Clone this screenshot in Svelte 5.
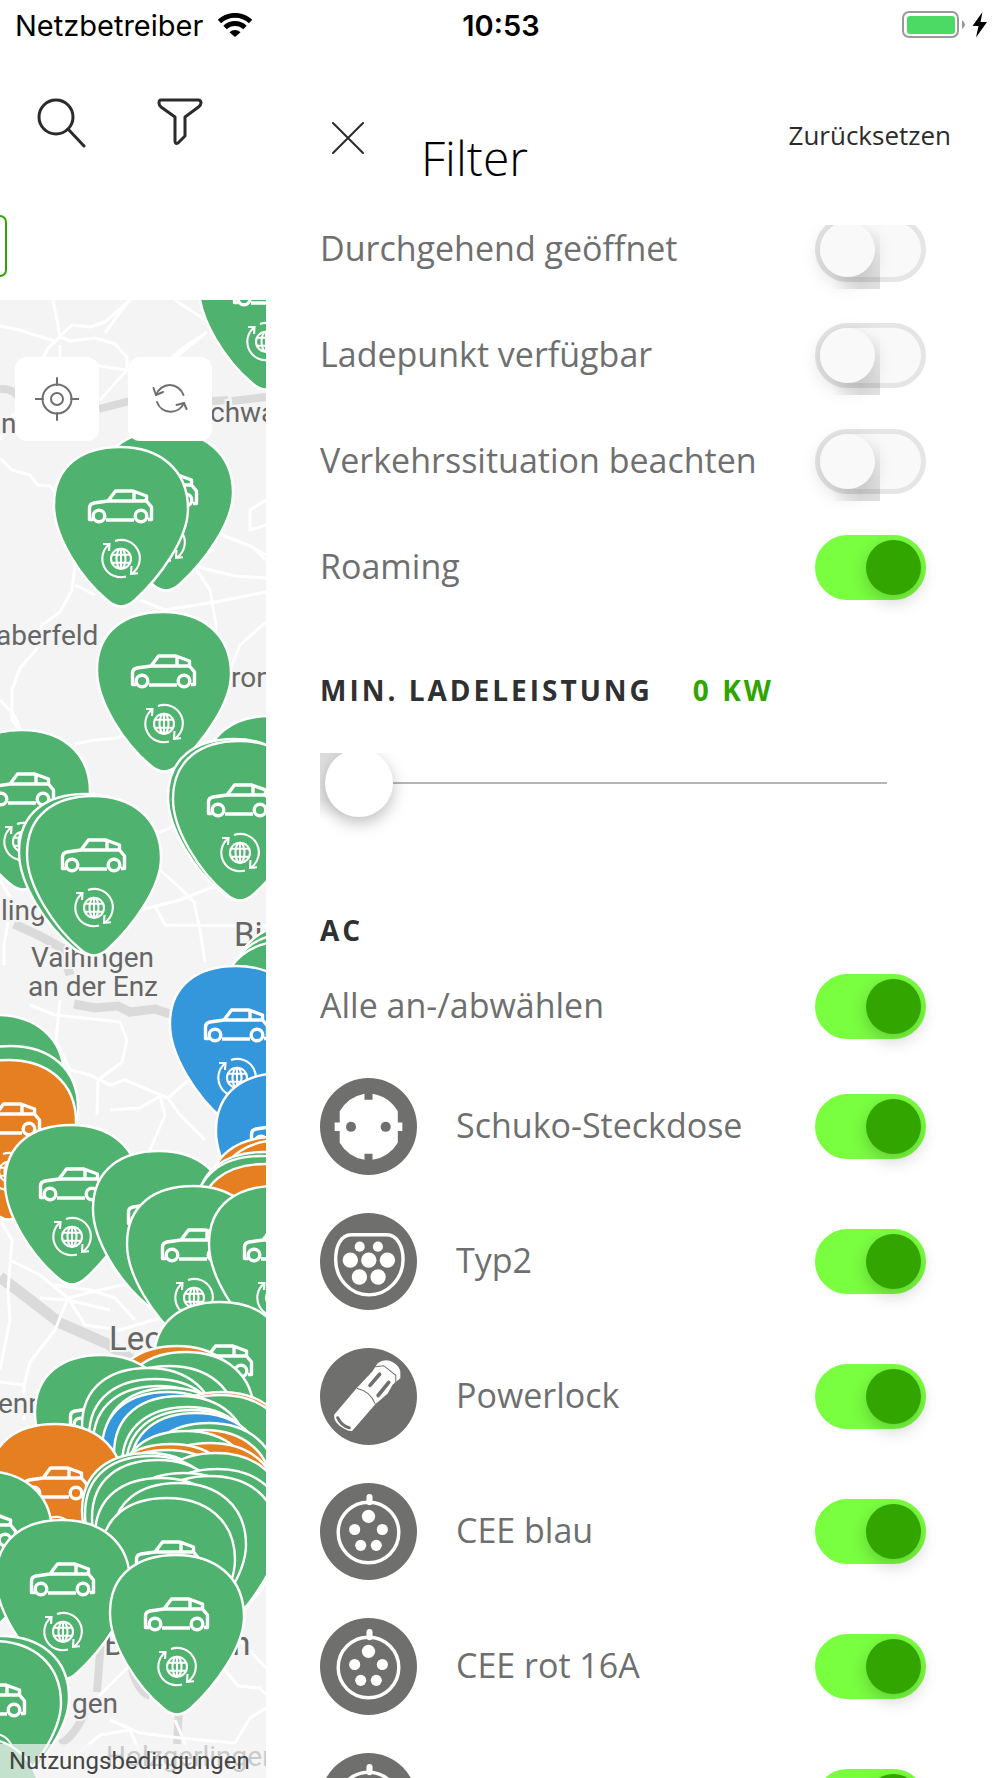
<script lang="ts">
  type Plug = 'schuko' | 'typ2' | 'powerlock' | 'cee';

  interface Option {
    id: string;
    label: string;
    on: boolean;
    plug?: Plug;
  }

  let general: Option[] = $state([
    { id: 'open', label: 'Durchgehend geöffnet', on: false },
    { id: 'free', label: 'Ladepunkt verfügbar', on: false },
    { id: 'traffic', label: 'Verkehrssituation beachten', on: false },
    { id: 'roaming', label: 'Roaming', on: true },
  ]);

  let connectors: Option[] = $state([
    { id: 'schuko', label: 'Schuko-Steckdose', on: true, plug: 'schuko' },
    { id: 'typ2', label: 'Typ2', on: true, plug: 'typ2' },
    { id: 'powerlock', label: 'Powerlock', on: true, plug: 'powerlock' },
    { id: 'cee-blue', label: 'CEE blau', on: true, plug: 'cee' },
    { id: 'cee-16', label: 'CEE rot 16A', on: true, plug: 'cee' },
    { id: 'cee-32', label: 'CEE rot 32A', on: true, plug: 'cee' },
  ]);

  let power = $state(0);
  let allOn = $derived(connectors.every((c) => c.on));

  function toggleAll() {
    const next = !allOn;
    connectors.forEach((c) => (c.on = next));
  }

  function reset() {
    power = 0;
    general.forEach((o) => (o.on = o.id === 'roaming'));
    connectors.forEach((c) => (c.on = true));
  }

  // Map markers, back to front: [x of the tip, top edge, colour]
  const G = '#4fb26e';
  const B = '#3496db';
  const O = '#e67e22';
  const pins: [number, number, string][] = [
    [266, 230, G], [166, 431, G], [121, 447, G], [164, 612, G],
    [272, 716, G], [23, 730, G], [235, 739, G], [240, 741, G],
    [86, 794, G], [94, 796, G], [302, 924, G], [296, 933, G],
    [290, 941, G], [237, 966, B], [-3, 1015, G], [11, 1046, G],
    [9, 1060, O], [283, 1073, B], [72, 1125, G], [276, 1137, O],
    [284, 1140, O], [160, 1151, G], [264, 1152, G], [262, 1156, G],
    [266, 1164, O], [194, 1186, G], [276, 1186, G], [221, 1302, G],
    [178, 1346, O], [187, 1352, G], [102, 1355, G], [170, 1366, G],
    [149, 1368, G], [156, 1379, G], [160, 1386, G], [171, 1388, G],
    [169, 1392, B], [223, 1392, O], [222, 1395, G], [181, 1396, G],
    [189, 1407, G], [193, 1410, G], [197, 1413, B], [210, 1423, G],
    [205, 1430, O], [187, 1431, G], [211, 1443, O], [172, 1444, O],
    [56, 1424, O], [168, 1450, G], [149, 1453, G], [217, 1453, G],
    [152, 1456, G], [159, 1460, G], [218, 1469, G], [185, 1473, G],
    [211, 1476, G], [162, 1478, G], [179, 1483, G], [168, 1498, G],
    [-15, 1471, G], [63, 1520, G], [177, 1555, G], [2, 1636, G],
    [-6, 1641, G], [-27, 1737, G],
  ];

  const roads = [
    'M53 300L57 320L60 337L48 348L42 360L30 400L8 420L0 440',
    'M0 326L20 330L38 336L55 341L72 325L90 327L105 322L130 300',
    'M60 337L70 341L95 338L115 344L127 357V370L100 400',
    'M60 345V360L100 366L127 370',
    'M105 333L118 315L130 300M175 300L205 320',
    'M207 332L180 350L150 380M207 332L160 370',
    'M0 458L12 470L30 475L38 485L50 486L60 498L70 530L75 565L72 590L60 612L42 625L36 650L20 668L12 690V720L20 730',
    'M75 585L95 595M140 600L165 610L215 602L266 592',
    'M190 560L210 590L216 625L212 660M190 565L235 576L266 578',
    'M210 530L250 546L266 555M266 500L250 510V530L266 525M266 560L250 545',
    'M266 622L240 645L230 670M170 560L215 550',
    'M0 700L14 715L20 728M75 744L95 740L118 738L140 720',
    'M130 844L170 828L200 790M160 870L180 888L194 902L200 930L205 962',
    'M140 910L180 900L210 888L240 886M155 906L165 925L266 926',
    'M0 880L12 900L4 945V965M30 1005L55 1015L120 1022L127 1040L122 1062L98 1080L97 1115',
    'M60 1000L56 1040L70 1070L90 1075L110 1085L125 1080L168 1098L200 1070',
    'M110 1110L140 1108L160 1096L165 1115L150 1150M168 1098L180 1115L205 1140',
    'M0 1220L12 1240L8 1290L10 1320L0 1370M10 1260L40 1275L68 1298L100 1290L135 1282',
    'M68 1298L55 1330L30 1362L24 1385L0 1382M68 1298L85 1325L120 1330L160 1318M40 1298L68 1300L110 1310',
    'M55 1285L90 1290L115 1298L135 1320M24 1385V1420',
    'M75 1720L105 1690L130 1665M110 1720L140 1733L180 1738L235 1743L250 1718L266 1708',
    'M225 1670L238 1686L260 1688L266 1695M175 1720L190 1755L178 1778M240 1640L266 1668',
    'M70 1760L100 1735L130 1730L150 1778M220 1778L245 1760L266 1762',
  ];

  const labels: [number, number, number, string][] = [
    [1, 433, 28, 'n'], [210, 422, 28, 'chwaigern'], [-4, 645, 28, 'aberfeld'],
    [231, 687, 28, 'ron'], [1, 920, 28, 'lingen'], [31, 967, 28, 'Vaihingen'],
    [28, 996, 28, 'an der Enz'], [234, 946, 33, 'Bietigheim'], [109, 1350, 33, 'Leonberg'],
    [-2, 1413, 28, 'enningen'], [104, 1655, 33, 'Böblingen'], [72, 1713, 28, 'gen'],
    [106, 1766, 28, 'Holzgerlingen'],
  ];
</script>

{#snippet plugIcon(kind: Plug | undefined)}
  <svg class="plug" viewBox="0 0 96 96" aria-hidden="true">
    <circle cx="48" cy="48" r="48" fill="#6f6f6e" />
    {#if kind === 'schuko'}
      <path fill="#fff" d="M19.5 33A36 36 0 0 1 44 15.5V21.5H52V15.5A36 36 0 0 1 77 33V44H81.500V52.500H77V64A36 36 0 0 1 52 81V75H44V81A36 36 0 0 1 19.500 64V52.500H14.500V44H19.500Z" />
      <circle cx="30.7" cy="48.300" r="5" fill="#6f6f6e" />
      <circle cx="65" cy="48.300" r="5" fill="#6f6f6e" />
    {:else if kind === 'typ2'}
      <path fill="none" stroke="#fff" stroke-width="3.400" d="M31 21.500H66C77 21.500 82.200 34 82.200 46C82.200 65 67 81 48.500 81C30 81 15.500 65 15.500 46C15.500 34 20 21.500 31 21.500Z" />
      <g fill="#fff">
        <circle cx="39.300" cy="33.300" r="5" /><circle cx="57.300" cy="33.300" r="5" />
        <circle cx="30" cy="46.700" r="7.600" /><circle cx="48.300" cy="46.700" r="7.600" /><circle cx="66.700" cy="46.700" r="7.600" />
        <circle cx="39" cy="63.300" r="7.600" /><circle cx="57.500" cy="63.300" r="7.600" />
      </g>
    {:else if kind === 'powerlock'}
      <path fill="#fff" d="M14 66L36 40L52 23L57 15Q62 11 69 12.500Q78 16 79.500 23V30L72 36L67 45L54.500 56L32 82Q29 83 24 80Q13 74 14 66Z" />
      <g fill="none" stroke="#6f6f6e" stroke-linecap="round">
        <path d="M37 40Q50 43 54.500 55M55 18.500L63 17.500L75 27V34" />
        <path stroke-width="3.600" d="M59 26L49.500 37M68 34L57.500 47" />
        <path stroke-width="3" d="M17.500 69Q21 77 29 79" />
      </g>
    {:else}
      <circle cx="48" cy="49" r="30" fill="none" stroke="#fff" stroke-width="3.400" />
      <path d="M49 14V19" stroke="#fff" stroke-width="6" stroke-linecap="round" />
      <g fill="#fff">
        <circle cx="48" cy="33" r="6.600" />
        <circle cx="34.300" cy="46" r="5.500" /><circle cx="61.700" cy="46" r="5.500" />
        <circle cx="40.300" cy="61.700" r="5.500" /><circle cx="55.700" cy="61.700" r="5.500" />
      </g>
    {/if}
  </svg>
{/snippet}

<div class="screen">
  <header class="status">
    <div class="carrier">
      <span>Netzbetreiber</span>
      <svg width="34" height="24" viewBox="0 0 34 24" aria-label="WLAN">
        <g fill="none" stroke="#000" stroke-width="4.800">
          <path d="M1.500 8.500A22.500 22.500 0 0 1 32.500 8.500" />
          <path d="M7 14.500A14.500 14.500 0 0 1 27 14.500" />
        </g>
        <path d="M11.500 19.300A8 8 0 0 1 22.500 19.300L17 24Z" />
      </svg>
    </div>
    <time>10:53</time>
    <div class="battery">
      <svg width="85" height="28" viewBox="0 0 85 28" aria-label="Akku lädt">
        <rect x="1" y="1" width="55" height="25" rx="6" fill="none" stroke="#9a9a9a" stroke-width="2" />
        <rect x="5" y="5" width="48" height="18" rx="3" fill="#4cd964" />
        <path d="M60 9Q66 13.500 60 18Z" fill="#9a9a9a" />
        <path d="M80.500 1L70.500 15H76.500L74 26.500L85 11H78.500Z" />
      </svg>
    </div>
  </header>

  <section class="map-side">
    <div class="toolbar">
      <button aria-label="Suchen">
        <svg width="50" height="50" viewBox="0 0 50 50">
          <circle cx="19" cy="19" r="17" />
          <path d="M31 31L47 48" />
        </svg>
      </button>
      <button aria-label="Filter">
        <svg width="46" height="48" viewBox="0 0 46 48">
          <path d="M4 2H41Q44 2 44 5Q44 7 41.500 9L28 19V38L21 45Q18 46.500 18 43V19L4 9Q2 7 2 5Q2 2 4 2Z" />
        </svg>
      </button>
    </div>
    <div class="chip"></div>

    <div class="map">
      <svg class="tiles" viewBox="0 300 266 1478" preserveAspectRatio="xMinYMin slice">
        <defs>
          <g id="marker">
            <path stroke="#fff" stroke-width="2.400" d="M-67 58C-67 18-38 0-1 0C38 0 67 22 67 62C67 92 38 131 14 153Q0 166-14 153C-40 131-67 90-67 58Z" />
            <g fill="none" stroke="#fff" stroke-width="3.400" stroke-linejoin="round">
              <path d="M-28 72.500H-31.500V61Q-31.500 57-27 56L-13 54L-5.500 44H12L25.500 49V54L30.500 60V72.500H27M-15 73H13M-13 54H26M13 44V54" />
              <circle cx="-22" cy="69" r="5.800" />
              <circle cx="20" cy="69" r="5.800" />
            </g>
            <g fill="none" stroke="#fff" stroke-width="2.100">
              <circle cy="111.700" r="10" />
              <ellipse cy="111.700" rx="4.500" ry="10" />
              <path d="M0 102V122M-9 107.700H9M-9 115.700H9" />
              <path d="M-12 97.500A18.500 18.500 0 0 0 5 129.500M-6 94A18.500 18.500 0 0 1 11 126.500" />
              <path d="M-18 97H-11.500L-12 104M10.500 119L10 126.800L17 126.300" />
            </g>
          </g>
        </defs>

        <g fill="none" stroke="#dadada" stroke-width="8">
          <path d="M0 389Q12 388 18 396M99 409L130 401M212 401L228 400M232 401L266 397" />
          <path d="M14 924L40 936L62 948L70 975M74 1004L95 1008L118 1006L130 1012L155 1009L170 1014" stroke-width="9" />
          <path d="M0 1277L20 1292L60 1323L108 1344L135 1362" stroke-width="11" />
          <path d="M101 1640L97 1692M130 1660Q135 1690 150 1696M85 1712Q75 1736 60 1744M179 1710L177 1744" />
        </g>
        <g fill="none" stroke="#fff" stroke-width="3" stroke-linejoin="round">
          {#each roads as road}
            <path d={road} />
          {/each}
        </g>
        <g class="places">
          {#each labels as [x, y, size, name]}
            <text {x} {y} font-size={size}>{name}</text>
          {/each}
        </g>
        {#each pins as [x, y, color]}
          <use href="#marker" {x} {y} fill={color} />
        {/each}
      </svg>

      <div class="map-buttons">
        <button aria-label="Mein Standort">
          <svg width="44" height="44" viewBox="0 0 44 44">
            <circle cx="22" cy="22" r="14.500" />
            <circle cx="22" cy="22" r="6" />
            <path d="M22 1V8M22 36V43M0 22H8M36 22H44" />
          </svg>
        </button>
        <button aria-label="Aktualisieren">
          <svg width="44" height="44" viewBox="0 0 44 44">
            <path d="M8 18A14.500 14.500 0 0 1 35.500 18M36 26A14.500 14.500 0 0 1 9 25" />
            <path d="M5.500 11L8 18L15 15M28.500 28L36 26L38.500 32" />
          </svg>
        </button>
      </div>
      <a class="terms" href="#terms">Nutzungsbedingungen</a>
    </div>
  </section>

  <aside class="drawer">
    <header class="drawer-head">
      <button class="close" aria-label="Schließen">
        <svg width="32" height="32" viewBox="0 0 32 32"><path d="M1 1L31 31M31 1L1 31" /></svg>
      </button>
      <h1>Filter</h1>
      <button class="reset" onclick={reset}>Zurücksetzen</button>
    </header>

    <div class="scroller">
      <div class="options">
        {#each general as option (option.id)}
          <div class="row">
            <label for={option.id}>{option.label}</label>
            <input id={option.id} class="switch" type="checkbox" bind:checked={option.on} />
          </div>
        {/each}

        <h2 class="power-title">
          <label for="power">MIN. LADELEISTUNG</label>
          <output for="power">{power} KW</output>
        </h2>
        <div class="slider">
          <input id="power" type="range" min="0" max="350" bind:value={power} />
        </div>

        <h2 class="group-title">AC</h2>
        <div class="row">
          <label for="all">Alle an-/abwählen</label>
          <input id="all" class="switch" type="checkbox" checked={allOn} onchange={toggleAll} />
        </div>
        {#each connectors as option (option.id)}
          <div class="row connector">
            {@render plugIcon(option.plug)}
            <label for={option.id}>{option.label}</label>
            <input id={option.id} class="switch" type="checkbox" bind:checked={option.on} />
          </div>
        {/each}
      </div>
    </div>
  </aside>
</div>

<style>
  :global(body) {
    background: #fff;
  }

  .screen {
    display: grid;
    grid-template-columns: 266px minmax(0, 1fr);
    grid-template-rows: 50px minmax(0, 1fr);
    height: 100vh;
    overflow: hidden;
    font-family: 'Open Sans', sans-serif;
    color: #6f6f6f;
  }

  button {
    padding: 0;
    border: 0;
    background: none;
    font: inherit;
    cursor: pointer;
  }

  button svg {
    display: block;
    fill: none;
    stroke: #2b2b2b;
    stroke-width: 3;
    stroke-linecap: round;
    stroke-linejoin: round;
  }

  /* Status bar */
  .status {
    grid-column: 1 / -1;
    display: grid;
    grid-template-columns: 1fr auto 1fr;
    align-items: center;
    padding: 0 13px 0 15px;
    font-family: Inter, sans-serif;
    font-size: 29px;
    color: #000;
  }

  .carrier {
    display: flex;
    align-items: center;
    gap: 15px;
  }

  .status time {
    font-weight: 600;
  }

  .battery {
    display: flex;
    justify-content: flex-end;
  }

  /* Map side */
  .map-side {
    display: flex;
    flex-direction: column;
    min-width: 0;
  }

  .toolbar {
    display: flex;
    align-items: flex-start;
    gap: 70px;
    height: 117px;
    padding: 48px 0 0 37px;
  }

  .chip {
    width: 5px;
    height: 58px;
    margin-bottom: 23px;
    border: 2px solid #2fa600;
    border-left: 0;
    border-radius: 0 8px 8px 0;
  }

  .map {
    position: relative;
    flex: 1;
    min-height: 0;
    overflow: hidden;
    background: #f4f4f4;
  }

  .tiles {
    display: block;
    width: 100%;
    height: 100%;
  }

  .places {
    font-family: Roboto, sans-serif;
    fill: #666;
    stroke: #f4f4f4;
    stroke-width: 4px;
    paint-order: stroke;
  }

  .map-buttons {
    position: absolute;
    top: 57px;
    left: 15px;
    display: flex;
    gap: 29px;
  }

  .map-buttons button {
    display: grid;
    place-items: center;
    width: 84px;
    height: 84px;
    border-radius: 12px;
    background: #fff;
  }

  .map-buttons svg {
    stroke: #6f6f6f;
    stroke-width: 2;
  }

  .terms {
    position: absolute;
    right: 0;
    bottom: 0;
    left: 0;
    padding-left: 9px;
    background: rgba(245, 245, 245, 0.7);
    font-family: Roboto, sans-serif;
    font-size: 24px;
    line-height: 34px;
    color: #444;
    text-decoration: none;
  }

  /* Drawer */
  .drawer {
    display: flex;
    flex-direction: column;
    min-width: 0;
    min-height: 0;
    background: #fff;
  }

  .drawer-head {
    display: flex;
    align-items: flex-start;
    height: 175px;
    padding: 0 49px 0 66px;
    box-sizing: border-box;
  }

  .close {
    margin-top: 72px;
  }

  .close svg {
    stroke-width: 2;
  }

  h1 {
    flex: 1;
    margin: 76px 0 0 57px;
    font-size: 48px;
    font-weight: 300;
    line-height: 64px;
    color: #000;
  }

  .reset {
    margin-top: 67px;
    font-size: 26px;
    line-height: 36px;
    color: #2b2b2b;
  }

  .scroller {
    flex: 1;
    min-height: 0;
    overflow: hidden;
  }

  /* List is scrolled slightly under the header */
  .options {
    margin-top: -29px;
    padding: 0 74px 0 54px;
  }

  .row {
    display: flex;
    align-items: center;
    justify-content: space-between;
    height: 106px;
  }

  .row label {
    flex: 1;
    padding-bottom: 3px;
    font-size: 34px;
    line-height: 44px;
  }

  .connector {
    gap: 39px;
    height: 135px;
  }

  .plug {
    width: 97px;
    height: 97px;
  }

  .switch {
    position: relative;
    flex: none;
    width: 111px;
    height: 65px;
    margin: 0;
    border: 5px solid #e5e5e5;
    border-radius: 33px;
    background: #f9f9f9;
    appearance: none;
    box-sizing: border-box;
  }

  .switch::before {
    content: '';
    position: absolute;
    top: 6px;
    left: 12px;
    width: 48px;
    height: 61px;
    background: linear-gradient(to right, transparent, rgba(0, 0, 0, 0.12) 60%);
    mask-image: linear-gradient(to bottom, transparent, #000 90%);
  }

  .switch::after {
    content: '';
    position: absolute;
    top: 0;
    left: 0;
    width: 55px;
    height: 55px;
    border-radius: 50%;
    background: #f9f9f9;
    box-shadow: 0 6px 20px rgba(0, 0, 0, 0.14);
  }

  .switch:checked {
    border-color: #7aff40;
    background: #7aff40;
  }

  .switch:checked::before {
    display: none;
  }

  .switch:checked::after {
    left: 46px;
    background: #32a500;
    box-shadow: 0 6px 18px rgba(0, 0, 0, 0.2);
  }

  h2 {
    margin: 0;
    font-size: 28px;
    font-weight: 700;
    line-height: 42px;
    letter-spacing: 3px;
    color: #2f3031;
  }

  .power-title {
    display: flex;
    gap: 40px;
    padding-top: 49px;
  }

  .power-title output {
    color: #2fa600;
  }

  .slider {
    position: relative;
    height: 60px;
    margin: 42px 39px 0 0;
    clip-path: inset(0 -20px -32px 0);
  }

  .slider::before {
    content: '';
    position: absolute;
    top: 0;
    left: 0;
    width: 66px;
    height: 65px;
    background: linear-gradient(to bottom, #dcdcdc, #e8e8e8 70%, transparent);
    mask-image: linear-gradient(to right, #000 30%, transparent 70%);
  }

  .slider input {
    position: relative;
    display: block;
    width: calc(100% - 5px);
    height: 60px;
    margin: 0 0 0 5px;
    background: linear-gradient(#b5b5b5, #b5b5b5) center / 100% 2px no-repeat;
    appearance: none;
  }

  .slider input::-webkit-slider-thumb {
    width: 68px;
    height: 68px;
    border-radius: 50%;
    background: #fff;
    box-shadow: 0 6px 16px rgba(0, 0, 0, 0.25);
    appearance: none;
  }

  .group-title {
    margin: 96px 0 2px;
  }
</style>
